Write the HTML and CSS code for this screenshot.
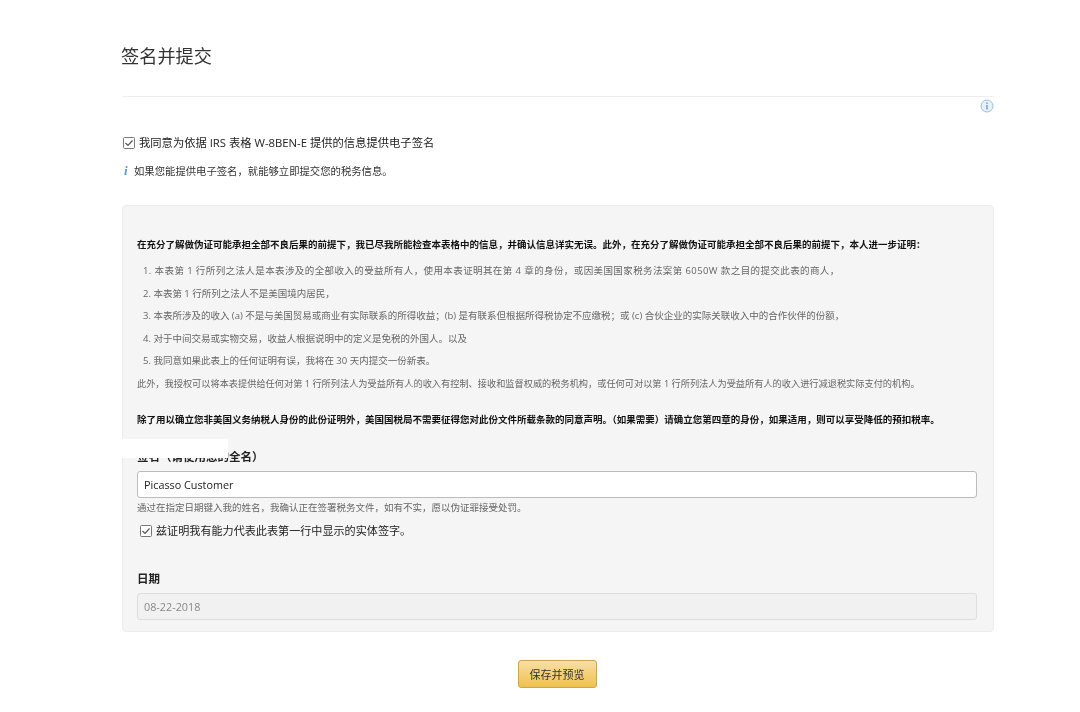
FILE: index.html
```html
<!DOCTYPE html>
<html lang="zh-CN">
<head>
  <meta charset="UTF-8">
  <meta name="viewport" content="width=device-width, initial-scale=1.0">
  <title>签名并提交</title>
  <link rel="stylesheet" href="styles.css">
</head>
<body>
  <main class="pagina">
    <h1 class="titulo">签名并提交</h1>
    <div class="regla"></div>
    <div class="fila-ayuda">
      <svg class="icono-ayuda" viewBox="0 0 14 14" width="14" height="14">
        <circle cx="7" cy="7" r="6" fill="#e6f0f8" stroke="#9dbfdc" stroke-width="1"/>
        <rect x="6.2" y="6" width="1.6" height="4.5" fill="#7fa6c9"/>
        <rect x="6.2" y="3.5" width="1.6" height="1.6" fill="#7fa6c9"/>
      </svg>
    </div>

    <label class="check check-acuerdo">
      <svg class="caja" viewBox="0 0 12 12" width="12" height="12">
        <rect x="0.5" y="0.5" width="11" height="11" rx="1" fill="#fff" stroke="#777"/>
        <path d="M2.5 6l2.5 2.5 4.5-5" fill="none" stroke="#555" stroke-width="1.2"/>
      </svg>
      <span>我同意为依据 IRS 表格 W-8BEN-E 提供的信息提供电子签名</span>
    </label>
    <p class="nota"><i class="nota-i">i</i>如果您能提供电子签名，就能够立即提交您的税务信息。</p>

    <section class="panel">
      <p class="fuerte primero">在充分了解做伪证可能承担全部不良后果的前提下，我已尽我所能检查本表格中的信息，并确认信息详实无误。此外，在充分了解做伪证可能承担全部不良后果的前提下，本人进一步证明：</p>
      <ol class="lista">
        <li>1. 本表第 1 行所列之法人是本表涉及的全部收入的受益所有人，使用本表证明其在第 4 章的身份，或因美国国家税务法案第 6050W 款之目的提交此表的商人，</li>
        <li>2. 本表第 1 行所列之法人不是美国境内居民，</li>
        <li>3. 本表所涉及的收入 (a) 不是与美国贸易或商业有实际联系的所得收益；(b) 是有联系但根据所得税协定不应缴税；或 (c) 合伙企业的实际关联收入中的合作伙伴的份额，</li>
        <li>4. 对于中间交易或实物交易，收益人根据说明中的定义是免税的外国人。以及</li>
        <li>5. 我同意如果此表上的任何证明有误，我将在 30 天内提交一份新表。</li>
      </ol>
      <p class="parrafo">此外，我授权可以将本表提供给任何对第 1 行所列法人为受益所有人的收入有控制、接收和监督权威的税务机构，或任何可对以第 1 行所列法人为受益所有人的收入进行减退税实际支付的机构。</p>
      <p class="fuerte segundo">除了用以确立您非美国义务纳税人身份的此份证明外，美国国税局不需要征得您对此份文件所载条款的同意声明。（如果需要）请确立您第四章的身份，如果适用，则可以享受降低的预扣税率。</p>

      <label class="etiqueta etiqueta-firma">签名（请使用您的全名）</label>
      <input class="campo" type="text" value="Picasso Customer">
      <p class="aviso">通过在指定日期键入我的姓名，我确认正在签署税务文件，如有不实，愿以伪证罪接受处罚。</p>
      <label class="check check-firma">
        <svg class="caja" viewBox="0 0 12 12" width="12" height="12">
          <rect x="0.5" y="0.5" width="11" height="11" rx="1" fill="#fff" stroke="#777"/>
          <path d="M2.5 6l2.5 2.5 4.5-5" fill="none" stroke="#555" stroke-width="1.2"/>
        </svg>
        <span>兹证明我有能力代表此表第一行中显示的实体签字。</span>
      </label>

      <label class="etiqueta etiqueta-fecha">日期</label>
      <input class="campo campo-inactivo" type="text" value="08-22-2018" disabled>

      <div class="parche"></div>
    </section>

    <div class="acciones">
      <button class="boton" type="button">保存并预览</button>
    </div>
  </main>
</body>
</html>
```

FILE: styles.css
```css
* {
  box-sizing: border-box;
}
body {
  margin: 0;
  background-color: #fff;
  color: #333;
  font-family: "Open Sans", "Noto Sans CJK SC", sans-serif;
}
.pagina {
  width: 1080px;
  height: 712px;
  padding: 44px 86px 0 122px;
  overflow: hidden;
  filter: blur(0.65px);
}
.titulo {
  margin: 0 0 0 -1px;
  font-size: 18.2px;
  line-height: 24px;
  font-weight: 400;
  color: #333;
}
.regla {
  height: 1px;
  margin-top: 28px;
  background-color: #eee;
}
.fila-ayuda {
  display: flex;
  justify-content: flex-end;
  height: 14px;
  margin-top: 2px;
}
.check {
  display: flex;
  align-items: center;
  color: #222;
}
.check-acuerdo {
  margin-top: 23px;
  padding-left: 1px;
  gap: 4px;
  font-size: 11.3px;
  line-height: 14px;
}
.nota {
  display: flex;
  align-items: center;
  margin: 14px 0 0;
  font-size: 10.35px;
  line-height: 14px;
  color: #333;
}
.nota-i {
  width: 12px;
  padding-left: 2px;
  font-family: "Liberation Serif", serif;
  font-size: 13px;
  font-weight: 700;
  color: #5a9bd0;
}
.panel {
  position: relative;
  height: 427px;
  margin-top: 27px;
  padding: 0 14px;
  background-color: #f5f5f5;
  border: 1px solid #ececec;
  border-radius: 4px;
}
.fuerte {
  margin: 0;
  font-size: 9.5px;
  line-height: 14px;
  font-weight: 700;
  color: #111;
}
.primero {
  margin-top: 32px;
}
.lista {
  margin: 12px 0 1.5px;
  padding: 0 0 0 6px;
  list-style: none;
  font-size: 9.5px;
  color: #666;
}
.lista li {
  line-height: 14px;
  margin-bottom: 8.5px;
}
.lista li:first-child {
  letter-spacing: 0.4px;
}
.parrafo {
  margin: 0;
  font-size: 9.2px;
  line-height: 14px;
  color: #666;
}
.segundo {
  margin-top: 22px;
}
.etiqueta {
  display: block;
  font-size: 11.5px;
  line-height: 14px;
  font-weight: 700;
  color: #222;
}
.etiqueta-firma {
  margin-top: 23px;
}
.campo {
  display: block;
  width: 840px;
  height: 27px;
  margin-top: 7px;
  padding: 0 6px;
  background-color: #fff;
  border: 1px solid #bbb;
  border-radius: 3px;
  font-family: inherit;
  font-size: 10.8px;
  color: #222;
}
.campo-inactivo {
  background-color: #f1f1f1;
  border-color: #ddd;
  color: #888;
}
.aviso {
  margin: 3px 0 0;
  font-size: 9.5px;
  line-height: 14px;
  color: #666;
}
.check-firma {
  margin-top: 9px;
  padding-left: 3px;
  gap: 4px;
  font-size: 11.1px;
  line-height: 14px;
}
.etiqueta-fecha {
  margin-top: 34px;
}
.parche {
  position: absolute;
  left: -3px;
  top: 233px;
  width: 108px;
  height: 19px;
  background-color: #fff;
}
.acciones {
  display: flex;
  justify-content: center;
  margin-top: 28px;
  padding-right: 2px;
}
.boton {
  width: 79px;
  height: 28px;
  background: linear-gradient(#f7dfa5, #f0c14b);
  border: 1px solid #c9a54e;
  border-radius: 3px;
  font-family: inherit;
  font-size: 11px;
  color: #333;
}
```
